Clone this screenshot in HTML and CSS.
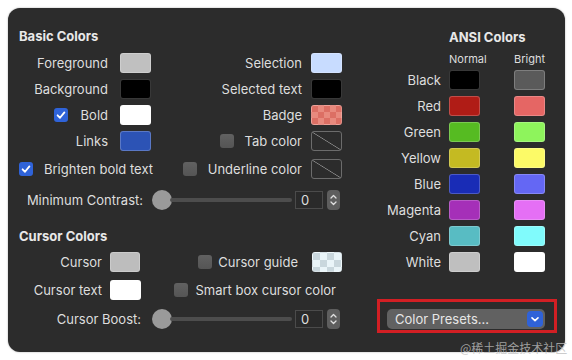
FILE: index.html
```html
<!DOCTYPE html>
<html lang="en">

<head>
    <meta charset="UTF-8">
    <meta name="viewport" content="width=device-width, initial-scale=1.0">
    <title>Colors</title>
    <link rel="stylesheet" href="styles.css">
</head>

<body>
    <div class="panel">
        <div class="left">
            <h3 class="title">Basic Colors</h3>

            <div class="basic">
                <div class="crow">
                    <span class="lbl">Foreground</span><span class="sw fg"></span>
                    <span class="lbl lbl-r">Selection</span><span class="sw sel"></span>
                </div>
                <div class="crow">
                    <span class="lbl">Background</span><span class="sw black"></span>
                    <span class="lbl lbl-r">Selected text</span><span class="sw black"></span>
                </div>
                <div class="crow">
                    <span class="lbl"><span class="cb on"><svg viewBox="0 0 14 14"><path d="M3.6 7.3 L6 9.8 L10.4 4.4" /></svg></span>Bold</span><span class="sw white"></span>
                    <span class="lbl lbl-r">Badge</span><span class="sw badge"></span>
                </div>
                <div class="crow">
                    <span class="lbl">Links</span><span class="sw links"></span>
                    <span class="lbl lbl-r"><span class="cb"></span>Tab color</span><span class="sw none"></span>
                </div>
                <div class="crow crow-gap">
                    <span class="chk-left"><span class="cb on"><svg viewBox="0 0 14 14"><path d="M3.6 7.3 L6 9.8 L10.4 4.4" /></svg></span>Brighten bold text</span>
                    <span class="lbl lbl-r"><span class="cb"></span>Underline color</span><span class="sw none"></span>
                </div>
            </div>

            <div class="slider-row first-slider">
                <span class="slbl">Minimum Contrast:</span>
                <span class="slider"><span class="knob"></span><span class="track"></span></span>
                <span class="field">0</span>
                <span class="stepper"><svg viewBox="0 0 13 20"><path d="M4 8 L6.5 5.5 L9 8 M4 12 L6.5 14.5 L9 12" /></svg></span>
            </div>

            <h3 class="title cursor-title">Cursor Colors</h3>

            <div class="cur-row">
                <span class="clbl">Cursor</span><span class="sw cur"></span>
                <span class="cur-right"><span class="cb"></span><span class="guide-lbl">Cursor guide</span><span class="sw guide"></span></span>
            </div>
            <div class="cur-row">
                <span class="clbl">Cursor text</span><span class="sw white"></span>
                <span class="cur-right smart"><span class="cb"></span><span class="smart-lbl">Smart box cursor color</span></span>
            </div>

            <div class="slider-row boost">
                <span class="slbl">Cursor Boost:</span>
                <span class="slider"><span class="knob"></span><span class="track"></span></span>
                <span class="field">0</span>
                <span class="stepper"><svg viewBox="0 0 13 20"><path d="M4 8 L6.5 5.5 L9 8 M4 12 L6.5 14.5 L9 12" /></svg></span>
            </div>
        </div>

        <div class="right">
            <h3 class="title ansi-title">ANSI Colors</h3>
            <div class="ansi-head">
                <span></span><span>Normal</span><span>Bright</span>
            </div>
            <div class="ansi">
                <span class="albl">Black</span><span class="sw a-black"></span><span class="sw a-bblack"></span>
                <span class="albl">Red</span><span class="sw a-red"></span><span class="sw a-bred"></span>
                <span class="albl">Green</span><span class="sw a-green"></span><span class="sw a-bgreen"></span>
                <span class="albl">Yellow</span><span class="sw a-yellow"></span><span class="sw a-byellow"></span>
                <span class="albl">Blue</span><span class="sw a-blue"></span><span class="sw a-bblue"></span>
                <span class="albl">Magenta</span><span class="sw a-magenta"></span><span class="sw a-bmagenta"></span>
                <span class="albl">Cyan</span><span class="sw a-cyan"></span><span class="sw a-bcyan"></span>
                <span class="albl">White</span><span class="sw a-white"></span><span class="sw a-bwhite"></span>
            </div>

            <!-- красная рамка вокруг выпадающего списка -->
            <div class="mark">
                <div class="popup">
                    <span>Color Presets...</span>
                    <span class="chev"><svg viewBox="0 0 16 16"><path d="M5 6.8 L8 9.6 L11 6.8" /></svg></span>
                </div>
            </div>
        </div>
    </div>

    <div class="watermark">@稀土掘金技术社区</div>
</body>

</html>
```

FILE: styles.css
```css
* {
    box-sizing: border-box;
}

body {
    margin: 0;
    position: relative;
    background: #fff;
    font-family: "Inter", "Noto Sans", sans-serif;
    font-size: 13px;
    color: #dedede;
}

.panel {
    margin: 8px;
    width: 557px;
    height: 344px;
    padding: 20px 0 0 11px;
    display: flex;
    background: #2c2c2c;
    border-radius: 12px;
    box-shadow: 0 0 2px rgba(0, 0, 0, 0.35);
}

.left {
    width: 351px;
}

.right {
    width: 187px;
}

.title {
    margin: 0;
    font-size: 13px;
    line-height: 16px;
    font-weight: 700;
    color: #e8e8e8;
}

.ansi-title {
    margin-left: 79px;
    margin-top: 1px;
}

/* swatches */
.sw {
    display: block;
    width: 31px;
    height: 20px;
    border-radius: 3px;
    border: 1px solid rgba(255, 255, 255, 0.22);
}

.fg { background: #c0c0c0; }
.sel { background: #c8dcff; }
.black { background: #000; }
.white { background: #fff; }
.links { background: #2c53b5; }
.cur { background: #bdbdbd; width: 30px; }

.badge {
    background: conic-gradient(#e88a7e 25%, #dc6f64 0 50%, #e88a7e 0 75%, #dc6f64 0);
    background-size: 12px 12px;
}

.guide {
    width: 30px;
    background: conic-gradient(#eaf5f9 25%, #c9d7dd 0 50%, #eaf5f9 0 75%, #c9d7dd 0);
    background-size: 14px 14px;
}

.none {
    border-color: #6c6c6c;
    background: linear-gradient(to top right, transparent calc(50% - 0.7px), #8c8c8c 50%, transparent calc(50% + 0.7px));
}

/* checkboxes */
.cb {
    display: inline-block;
    width: 14px;
    height: 14px;
    border-radius: 3px;
    background: linear-gradient(#616161, #555);
    flex: none;
}

.cb.on {
    background: #2f63d9;
}

.cb svg {
    display: block;
    width: 14px;
    height: 14px;
    fill: none;
    stroke: #fff;
    stroke-width: 1.8;
    stroke-linecap: round;
    stroke-linejoin: round;
}

/* basic colors */
.basic {
    margin-top: 9px;
    display: flex;
    flex-direction: column;
    gap: 6px;
}

.crow {
    display: grid;
    grid-template-columns: 101px 31px 160px 31px;
    height: 20px;
    align-items: center;
}

.crow-gap {
    margin-top: 2px;
}

.lbl {
    display: flex;
    justify-content: flex-end;
    align-items: center;
    gap: 13px;
    padding-right: 12px;
    white-space: nowrap;
}

.lbl-r {
    padding-right: 9px;
    gap: 11px;
}

.chk-left {
    grid-column: 1 / span 2;
    display: flex;
    align-items: center;
    gap: 11px;
    white-space: nowrap;
}

/* sliders */
.slider-row {
    display: flex;
    align-items: center;
    height: 20px;
}

.first-slider {
    margin-top: 11px;
}

.boost {
    margin-top: 9px;
}

.slbl {
    width: 133px;
    padding-right: 9px;
    text-align: right;
    white-space: nowrap;
}

.boost .slbl {
    padding-right: 11px;
}

.slider {
    width: 140px;
    display: flex;
    align-items: center;
}

.knob {
    width: 20px;
    height: 20px;
    border-radius: 50%;
    background: #9a9a9a;
    flex: none;
}

.track {
    flex: 1;
    height: 4px;
    margin-left: -2px;
    border-radius: 2px;
    background: #4d4d4d;
}

.field {
    width: 28px;
    height: 18px;
    margin-left: 3px;
    padding-left: 5px;
    line-height: 16px;
    border: 1px solid #4b4b4b;
    background: #2a2a2a;
}

.stepper {
    width: 13px;
    height: 20px;
    margin-left: 4px;
    border-radius: 4px;
    background: #5e5e5e;
}

.stepper svg {
    display: block;
    width: 13px;
    height: 20px;
    fill: none;
    stroke: #e0e0e0;
    stroke-width: 1.3;
    stroke-linecap: round;
    stroke-linejoin: round;
}

/* cursor colors */
.cursor-title {
    margin-top: 18px;
}

.cur-row {
    width: 323px;
    height: 20px;
    margin-top: 8px;
    display: flex;
    align-items: center;
}

.clbl {
    width: 91px;
    padding-right: 8px;
    text-align: right;
    white-space: nowrap;
}

.cur-right {
    flex: 1;
    display: flex;
    justify-content: flex-end;
    align-items: center;
    white-space: nowrap;
}

.guide-lbl {
    margin-left: 6px;
    margin-right: 14px;
}

.smart {
    padding-right: 6px;
}

.smart-lbl {
    margin-left: 7px;
}

/* ansi colors */
.ansi-head,
.ansi {
    display: grid;
    grid-template-columns: 79px 65px 43px;
}

.ansi-head {
    margin-top: 8px;
    font-size: 11px;
    line-height: 13px;
}

.ansi {
    margin-top: 4px;
    grid-auto-rows: 20px;
    row-gap: 6px;
    align-items: center;
}

.albl {
    text-align: right;
    padding-right: 8px;
}

.a-black { background: #000; }
.a-bblack { background: #5a5a5a; }
.a-red { background: #b01c16; }
.a-bred { background: #e56664; }
.a-green { background: #56bb22; }
.a-bgreen { background: #8ef45c; }
.a-yellow { background: #c4ba22; }
.a-byellow { background: #fcfa67; }
.a-blue { background: #192cb6; }
.a-bblue { background: #6467f4; }
.a-magenta { background: #a52fb8; }
.a-bmagenta { background: #e56ff5; }
.a-cyan { background: #58bcc3; }
.a-bcyan { background: #80fbfc; }
.a-white { background: #bfbfbf; }
.a-bwhite { background: #fff; }

.mark {
    width: 180px;
    height: 34px;
    margin: 27px 0 0 7px;
    padding: 7px 9px 1px 7px;
    border: 3px solid #d21f24;
}

.popup {
    height: 20px;
    padding: 0 2px 0 8px;
    display: flex;
    justify-content: space-between;
    align-items: center;
    border-radius: 5px;
    background: #616161;
    color: #e6e6e6;
}

.chev {
    width: 16px;
    height: 16px;
    border-radius: 4px;
    background: #2f62d8;
}

.chev svg {
    display: block;
    width: 16px;
    height: 16px;
    fill: none;
    stroke: #fff;
    stroke-width: 1.6;
    stroke-linecap: round;
    stroke-linejoin: round;
}

.watermark {
    position: absolute;
    left: 460px;
    top: 341px;
    font-family: "Noto Sans CJK SC", sans-serif;
    font-size: 12px;
    line-height: 13px;
    color: rgba(190, 190, 190, 0.8);
}
```
